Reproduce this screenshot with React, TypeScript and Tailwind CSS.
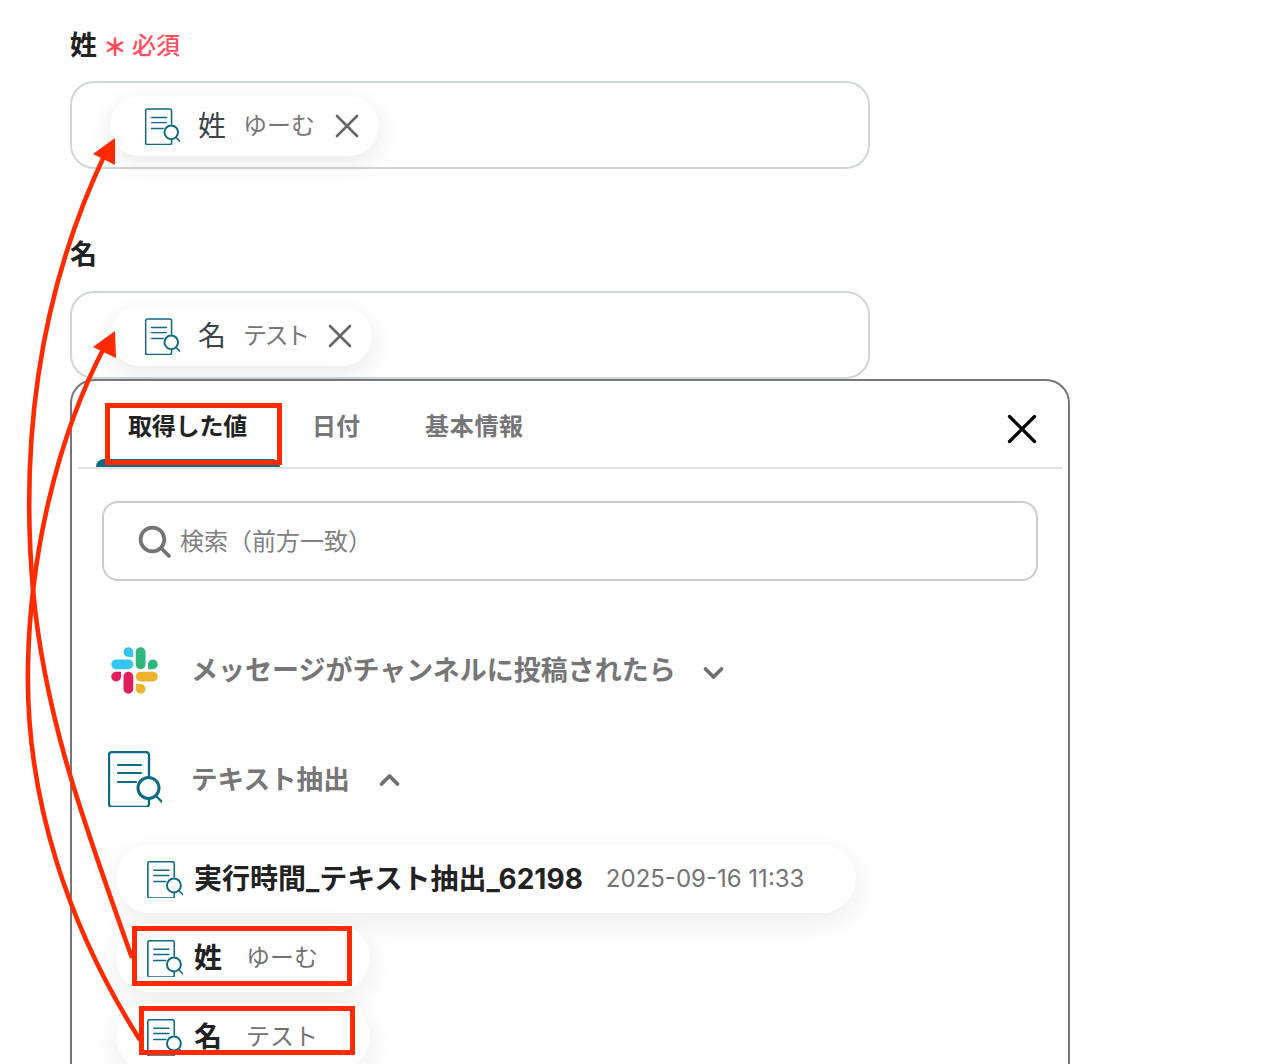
import React from "react";

function DocIcon({ className }: { className: string }) {
  return (
    <svg viewBox="0 0 54 56" fill="none" stroke="#0f6a86" strokeLinecap="round" strokeLinejoin="round" className={className}>
      <path d="M41 24V4a3 3 0 0 0-3-3H4a3 3 0 0 0-3 3v49a3 3 0 0 0 3 3h34a3 3 0 0 0 3-3v-5" strokeWidth="2.4" />
      <path d="M10 14h23M10 22h23M10 31h18" strokeWidth="2.2" />
      <circle cx="40.5" cy="37" r="10.5" strokeWidth="3" />
      <path d="M48 45l6 6" strokeWidth="2.4" />
    </svg>
  );
}

function XIcon({ className, color, width }: { className: string; color: string; width: number }) {
  return (
    <svg viewBox="0 0 24 24" fill="none" stroke={color} strokeWidth={width} strokeLinecap="round" className={className}>
      <path d="M2 2l20 20M22 2L2 22" />
    </svg>
  );
}

function Chevron({ up, className }: { up?: boolean; className: string }) {
  return (
    <svg viewBox="0 0 20 14" fill="none" stroke="#6f6f6f" strokeWidth="3.8" strokeLinecap="round" strokeLinejoin="round" className={className}>
      <path d={up ? "M2 11l8-8 8 8" : "M2 3l8 8 8-8"} />
    </svg>
  );
}

function SlackLogo({ className }: { className: string }) {
  return (
    <svg viewBox="0 0 127 127" className={className}>
      <path d="M27.2 80c0 7.3-5.9 13.2-13.2 13.2C6.7 93.2.8 87.3.8 80c0-7.3 5.9-13.2 13.2-13.2h13.2V80zm6.6 0c0-7.3 5.9-13.2 13.2-13.2 7.3 0 13.2 5.9 13.2 13.2v33c0 7.3-5.9 13.2-13.2 13.2-7.3 0-13.2-5.9-13.2-13.2V80z" fill="#E01E5A" />
      <path d="M47 27c-7.3 0-13.2-5.9-13.2-13.2C33.8 6.5 39.7.6 47 .6c7.3 0 13.2 5.9 13.2 13.2V27H47zm0 6.7c7.3 0 13.2 5.9 13.2 13.2 0 7.3-5.9 13.2-13.2 13.2H13.9C6.6 60.1.7 54.2.7 46.9c0-7.3 5.9-13.2 13.2-13.2H47z" fill="#36C5F0" />
      <path d="M99.9 46.9c0-7.3 5.9-13.2 13.2-13.2 7.3 0 13.2 5.9 13.2 13.2 0 7.3-5.9 13.2-13.2 13.2H99.9V46.9zm-6.6 0c0 7.3-5.9 13.2-13.2 13.2-7.3 0-13.2-5.9-13.2-13.2V13.8C66.9 6.5 72.8.6 80.1.6c7.3 0 13.2 5.9 13.2 13.2v33.1z" fill="#2EB67D" />
      <path d="M80.1 99.8c7.3 0 13.2 5.9 13.2 13.2 0 7.3-5.9 13.2-13.2 13.2-7.3 0-13.2-5.9-13.2-13.2V99.8h13.2zm0-6.6c-7.3 0-13.2-5.9-13.2-13.2 0-7.3 5.9-13.2 13.2-13.2h33.1c7.3 0 13.2 5.9 13.2 13.2 0 7.3-5.9 13.2-13.2 13.2H80.1z" fill="#ECB22E" />
    </svg>
  );
}

function FieldChip({ name, value, valueClass }: { name: string; value: string; valueClass: string }) {
  return (
    <div className="flex h-[60px] w-fit items-center rounded-full bg-white pl-[35px] pr-[20px] shadow-[0_8px_24px_rgba(0,0,0,0.09)]">
      <DocIcon className="h-[37px] w-[35px] shrink-0" />
      <span className="ml-[18px] text-[28px] leading-[36px] text-[#3d4349]">{name}</span>
      <span className={`ml-[17px] text-[24px] leading-[32px] text-[#777777] ${valueClass}`}>{value}</span>
      <XIcon className="ml-[20px] h-[24px] w-[24px]" color="#666666" width={2.6} />
    </div>
  );
}

function OutputChip({ name, value, gap, valueClass }: { name: string; value: string; gap: string; valueClass: string }) {
  return (
    <div className={`flex h-[68px] items-center rounded-full bg-white pl-[31px] shadow-[0_8px_30px_rgba(0,0,0,0.08)] ${gap}`}>
      <DocIcon className="h-[37px] w-[36px] shrink-0" />
      <span className="ml-[11px] whitespace-nowrap text-[28px] font-bold leading-[36px] text-[#222222]">{name}</span>
      <span className={`whitespace-nowrap text-[24px] leading-[32px] text-[#737373] ${valueClass}`}>{value}</span>
    </div>
  );
}

function Annotations() {
  return (
    <svg viewBox="0 0 1264 1064" className="pointer-events-none absolute left-0 top-0 h-[1064px] w-[1264px]" fill="none">
      <path d="M132 958C85 825 45 720 33 590C20 440 40 290 106 152" stroke="#ff2a00" strokeWidth="4.6" />
      <path d="M140 1040C70 930 25 800 28 665C30 560 55 440 106 344" stroke="#ff2a00" strokeWidth="4.6" />
      <path d="M115 138L93 154L115 165Z" fill="#ff2a00" />
      <path d="M115 331L93 347L116 358Z" fill="#ff2a00" />
      <rect x="107.500" y="405.500" width="172" height="57" stroke="#ff2a00" strokeWidth="5" />
      <rect x="134.5" y="928.5" width="215" height="55" stroke="#ff2a00" strokeWidth="5" />
      <rect x="141.500" y="1008.5" width="211" height="44" stroke="#ff2a00" strokeWidth="5" />
    </svg>
  );
}

export default function App() {
  return (
    <div className="relative h-[1064px] w-[1264px] overflow-hidden bg-white pl-[70px] pt-[28px] font-['Inter','Noto_Sans_CJK_JP',sans-serif]">
      <div className="flex h-[34px] items-center pt-[2px]">
        <span className="text-[27px] font-bold leading-[34px] text-[#222222]">姓</span>
        <span className="ml-[6px] pt-[3px] text-[24px] font-black leading-[34px] text-[#ff4d63]">＊</span>
        <span className="ml-[5px] text-[24px] font-medium leading-[34px] text-[#ff4d63]">必須</span>
      </div>
      <div className="mt-[19px] h-[88px] w-[800px] rounded-[24px] border-2 border-[#d0d5da] pl-[38px] pt-[13px]">
        <FieldChip name="姓" value="ゆーむ" valueClass="" />
      </div>

      <div className="mt-[68px] flex h-[34px] items-center pt-[2px]">
        <span className="text-[27px] font-bold leading-[34px] text-[#222222]">名</span>
      </div>
      <div className="mt-[20px] h-[88px] w-[800px] rounded-[24px] border-2 border-[#d0d5da] pl-[38px] pt-[13px]">
        <FieldChip name="名" value="テスト" valueClass="tracking-[-2.5px]" />
      </div>

      <div className="h-[700px] w-[1000px] rounded-t-[24px] border-2 border-b-0 border-[#777777] bg-white">
        <div className="mx-[6px] flex h-[88px] items-stretch border-b-2 border-[#e2e2e2] pl-[18px] pr-[25px]">
          <div className="flex w-[184px] flex-col px-[32px] pt-[30px]">
            <span className="whitespace-nowrap text-[24px] font-bold leading-[32px] tracking-[-0.2px] text-[#222222]">取得した値</span>
            <div className="-mx-[32px] mt-auto h-[8px] rounded-t-[8px] bg-[#0f6a86]" />
          </div>
          <div className="px-[32px] pt-[30px]">
            <span className="whitespace-nowrap text-[24px] font-semibold leading-[32px] text-[#767676]">日付</span>
          </div>
          <div className="pl-[33px] pt-[30px]">
            <span className="whitespace-nowrap text-[24px] font-semibold leading-[32px] tracking-[0.7px] text-[#767676]">基本情報</span>
          </div>
          <div className="ml-auto flex items-center pt-[9px]">
            <XIcon className="h-[30px] w-[30px]" color="#000000" width={2.6} />
          </div>
        </div>

        <div className="ml-[30px] mt-[32px] flex h-[80px] w-[936px] items-center rounded-[16px] border-2 border-[#cccccc] pl-[34px]">
          <svg viewBox="0 0 32 32" fill="none" stroke="#757575" strokeWidth="3.6" strokeLinecap="round" className="h-[33px] w-[33px]">
            <circle cx="14" cy="14" r="11.5" />
            <path d="M23 23l7 7" />
          </svg>
          <span className="ml-[9px] pt-[2px] text-[24px] leading-[32px] text-[#808080]">検索（前方一致）</span>
        </div>

        <div className="ml-[39px] mt-[59px] flex h-[60px] items-center">
          <SlackLogo className="h-[47px] w-[47px] shrink-0" />
          <span className="ml-[33px] whitespace-nowrap pt-[2px] text-[27px] font-semibold leading-[36px] text-[#767676]">メッセージがチャンネルに投稿されたら</span>
          <Chevron className="ml-[26px] mt-[5px] h-[14px] w-[23px]" />
        </div>

        <div className="ml-[36px] mt-[51px] flex h-[56px] items-center">
          <DocIcon className="h-[56px] w-[54px] shrink-0" />
          <span className="ml-[29px] whitespace-nowrap text-[26.6px] font-semibold leading-[36px] text-[#767676]">テキスト抽出</span>
          <Chevron up className="ml-[28px] mt-[2px] h-[14px] w-[23px]" />
        </div>

        <div className="ml-[44px] mt-[38px] flex flex-col gap-[11px]">
          <OutputChip name="実行時間_テキスト抽出_62198" value="2025-09-16 11:33" gap="w-[740px]" valueClass="ml-[23px]" />
          <OutputChip name="姓" value="ゆーむ" gap="w-[254px]" valueClass="ml-[24px]" />
          <OutputChip name="名" value="テスト" gap="w-[254px]" valueClass="ml-[24px]" />
        </div>
      </div>

      <Annotations />
    </div>
  );
}
